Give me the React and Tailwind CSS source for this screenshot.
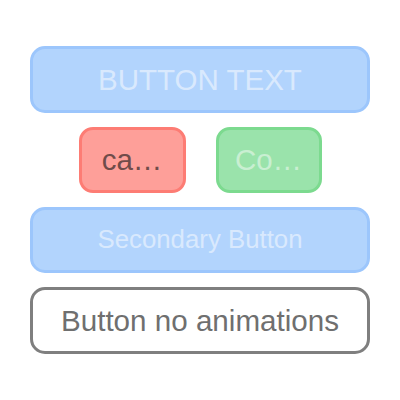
export default function App() {
  const font = { fontFamily: '"Liberation Sans", Arial, sans-serif' };
  return (
    <div className="w-[400px] h-[400px] bg-white flex flex-col items-center justify-center gap-[14px]" style={font}>
      <div className="w-[340px] h-[67px] rounded-[15px] border-[3px] border-[#9cc6fc] bg-[#b2d4fd] flex items-center justify-center text-[29.5px] text-[#d9e9fd] leading-none">
        BUTTON TEXT
      </div>
      <div className="flex gap-[30px]">
        <div className="w-[107px] h-[66px] rounded-[14px] border-[3px] border-[#fd7c74] bg-[#fe9f99] flex items-center justify-center text-[29.5px] text-[#704c4a] leading-none">
          ca…
        </div>
        <div className="w-[106px] h-[66px] rounded-[14px] border-[3px] border-[#7cda8f] bg-[#9ae3ab] flex items-center justify-center text-[29.5px] text-[#c9efd2] leading-none">
          Co…
        </div>
      </div>
      <div className="w-[340px] h-[66px] rounded-[15px] border-[3px] border-[#9cc6fc] bg-[#b2d4fd] flex items-center justify-center text-[25.8px] text-[#d9e9fd] leading-none">
        Secondary Button
      </div>
      <div className="w-[340px] h-[67px] rounded-[15px] border-[3px] border-[#7f7f7f] bg-white flex items-center justify-center text-[29.6px] text-[#6f6f6f] leading-none">
        Button no animations
      </div>
    </div>
  );
}
